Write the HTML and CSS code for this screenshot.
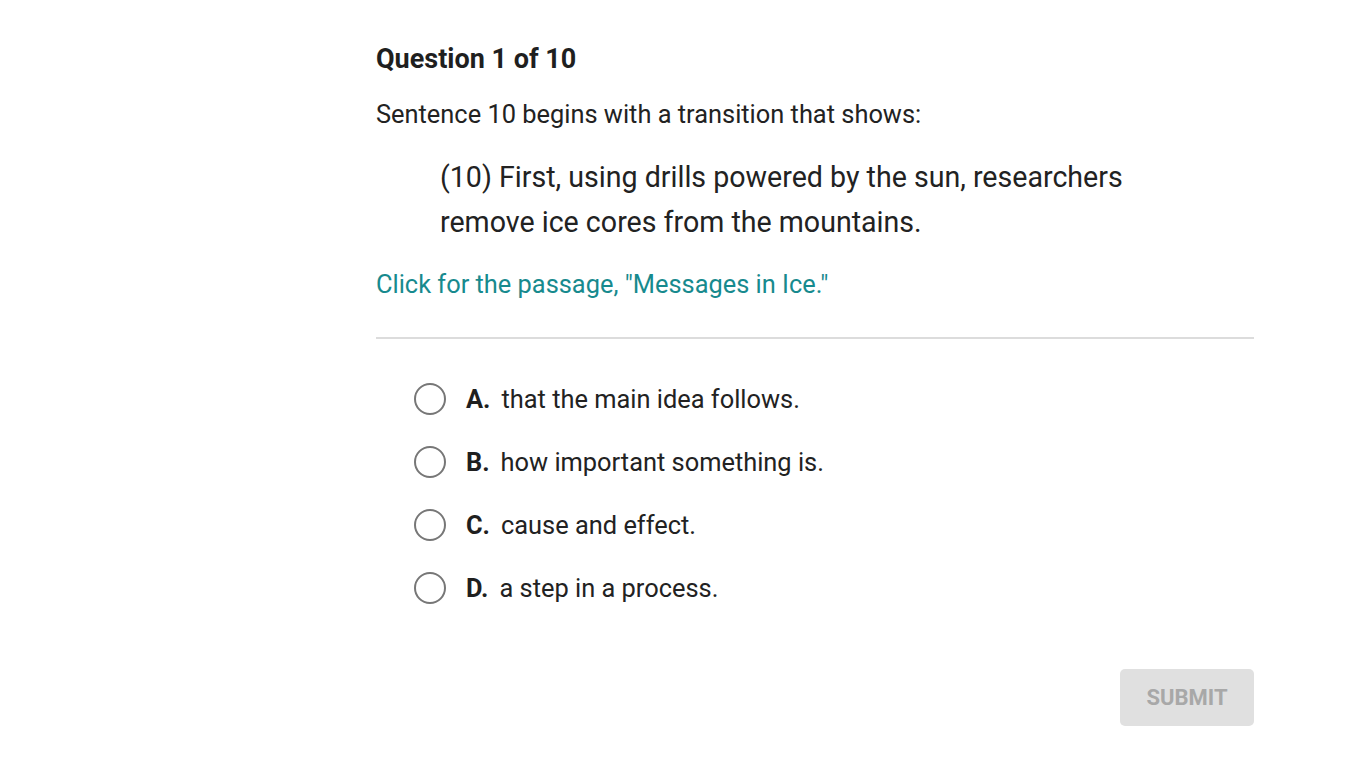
FILE: index.html
```html
<!DOCTYPE html>
<html>
<head>
<meta charset="utf-8">
<link rel="stylesheet" href="styles.css">
</head>
<body>
<main class="quiz">
  <h1 class="title">Question 1 of 10</h1>
  <p class="prompt">Sentence 10 begins with a transition that shows:</p>
  <blockquote class="quote">(10) First, using drills powered by the sun, researchers remove ice cores from the mountains.</blockquote>
  <a class="passage" href="#">Click for the passage, "Messages in Ice."</a>
  <hr class="divider">
  <ul class="options">
    <li class="option"><span class="radio"></span><span class="letter">A.</span><span class="text">that the main idea follows.</span></li>
    <li class="option"><span class="radio"></span><span class="letter">B.</span><span class="text">how important something is.</span></li>
    <li class="option"><span class="radio"></span><span class="letter">C.</span><span class="text">cause and effect.</span></li>
    <li class="option"><span class="radio"></span><span class="letter">D.</span><span class="text">a step in a process.</span></li>
  </ul>
  <div class="actions"><button class="submit">SUBMIT</button></div>
</main>
</body>
</html>
```
FILE: styles.css
```css
html, body {
  margin: 0;
  padding: 0;
  background: #fff;
}
body {
  font-family: Roboto, "Liberation Sans", sans-serif;
  color: #222;
}
.quiz {
  width: 878px;
  margin-left: 376px;
  padding-top: 41px;
}
.title {
  margin: 0;
  font-size: 27px;
  font-weight: 700;
  line-height: 36px;
  color: #1f1f1f;
}
.prompt {
  margin: 20px 0 0;
  font-size: 25.4px;
  line-height: 34px;
  color: #222;
}
.quote {
  margin: 24px 0 0 64px;
  width: 720px;
  font-size: 28.6px;
  line-height: 45px;
  color: #222;
}
.passage {
  display: block;
  margin-top: 22px;
  font-size: 25.4px;
  line-height: 34px;
  color: #178a8e;
  text-decoration: none;
}
.divider {
  margin: 36px 0 0;
  border: 0;
  height: 2px;
  background: #dcdcdc;
}
.options {
  list-style: none;
  margin: 29px 0 0;
  padding: 0 0 0 38px;
}
.option {
  display: flex;
  align-items: center;
  height: 63px;
  font-size: 25.4px;
}
.option:first-child {
  height: 62px;
}
.radio {
  width: 28px;
  height: 28px;
  border: 2px solid #777;
  border-radius: 50%;
  box-sizing: content-box;
  flex: none;
  margin-right: 20px;
}
.letter {
  font-weight: 700;
  margin-right: 11px;
  color: #1f1f1f;
}
.text {
  color: #222;
}
.actions {
  display: flex;
  justify-content: flex-end;
  margin-top: 50px;
}
.submit {
  width: 134px;
  height: 57px;
  border: 0;
  border-radius: 5px;
  background: #e0e0e0;
  color: #a8a8a8;
  font-family: Roboto, "Liberation Sans", sans-serif;
  font-size: 22px;
  font-weight: 700;
}
```
